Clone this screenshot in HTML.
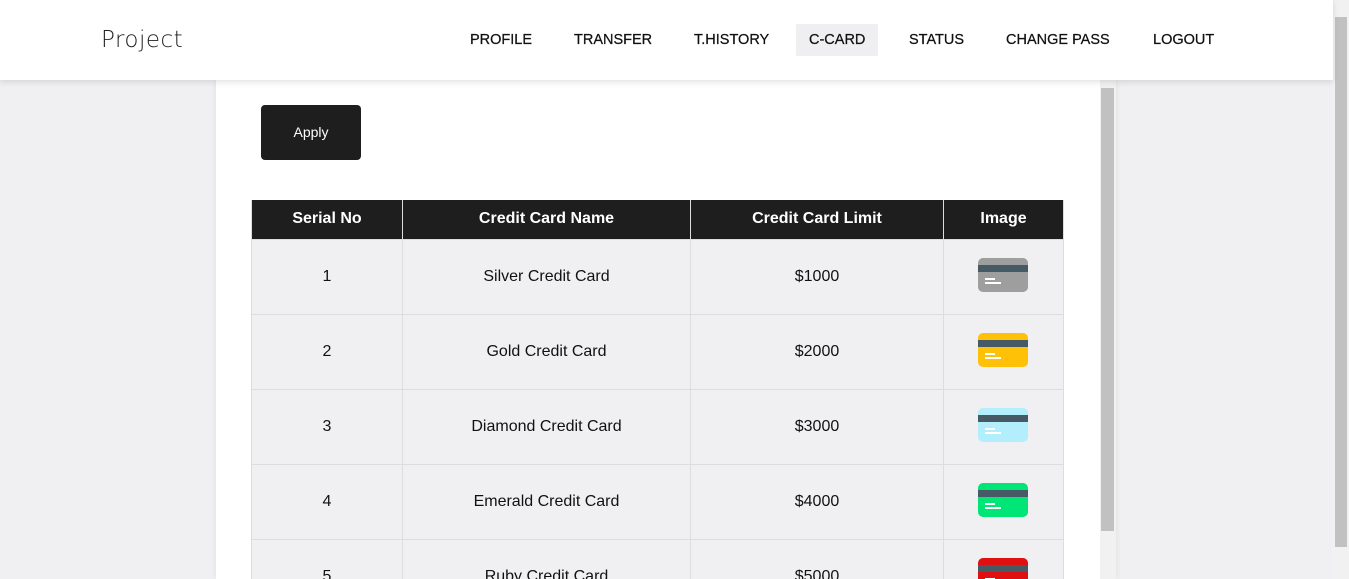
<!DOCTYPE html>
<html style="height:579px;overflow:hidden"><head><style>
*{box-sizing:border-box;margin:0;padding:0}
body{width:1349px;height:579px;overflow:hidden;background:#f0f0f2;font-family:"Liberation Sans",Arial,sans-serif;position:relative}
.nav{position:absolute;left:0;top:0;width:1333px;height:80px;background:#fff;box-shadow:0 2px 6px rgba(0,0,0,.12);z-index:5}
.logo{position:absolute;left:101px;top:27px;font-size:23px;color:#222;letter-spacing:.5px;font-family:"DejaVu Sans","Liberation Sans",sans-serif;font-weight:300}
.nav a{position:absolute;top:24px;height:32px;line-height:32px;font-size:14.5px;color:#111;padding:0 13px;text-decoration:none;-webkit-text-stroke:.25px #111}
.nav a.act{background:#efeff1;border-radius:2px}
.main{position:absolute;left:216px;top:80px;width:900px;height:499px;background:#fff;box-shadow:0 0 6px rgba(0,0,0,.08);overflow:hidden}
.isb{position:absolute;left:884px;top:0;width:16px;height:499px;background:#f1f1f1}
.isb div{position:absolute;left:1px;top:8px;width:13px;height:443px;background:#c1c1c1}
.btn{position:absolute;left:45px;top:25px;width:100px;height:55px;background:#1e1e1e;color:#fff;border-radius:4px;font-size:14px;text-align:center;line-height:55px}
table{position:absolute;left:35px;top:120px;border-collapse:collapse;width:813px;font-size:16px}
th{background:#1e1e1e;color:#fff;height:39px;font-weight:bold;border:1px solid #ddd;border-top:none}
td{background:#f0f0f2;height:75px;text-align:center;border:1px solid #ddd;color:#111}
.c{display:inline-block;width:50px;height:34px;border-radius:5px;position:relative;vertical-align:middle;margin:-3px 0 0 -2px;overflow:hidden}
.c:before{content:"";position:absolute;left:0;right:0;top:7px;height:7px;background:#455a64}
.c:after{content:"";position:absolute;left:7px;top:20px;width:10px;height:2px;background:#fff;box-shadow:0 4px 0 0 #fff,6px 4px 0 0 #fff}
.psb{position:absolute;left:1333px;top:0;width:16px;height:579px;background:#f1f1f1}
.psb div{position:absolute;left:2px;top:17px;width:12px;height:530px;background:#c1c1c1}
</style></head><body>
<div class="nav"><div class="logo">Project</div>
<a style="left:457px">PROFILE</a><a style="left:561px">TRANSFER</a><a style="left:681px">T.HISTORY</a><a class="act" style="left:796px">C-CARD</a><a style="left:896px">STATUS</a><a style="left:993px">CHANGE PASS</a><a style="left:1140px">LOGOUT</a></div>
<div class="main">
<div class="btn">Apply</div>
<table>
<tr><th style="width:151px">Serial No</th><th style="width:288px">Credit Card Name</th><th style="width:253px">Credit Card Limit</th><th>Image</th></tr>
<tr><td>1</td><td>Silver Credit Card</td><td>$1000</td><td><span class="c" style="background:#9e9e9e"></span></td></tr>
<tr><td>2</td><td>Gold Credit Card</td><td>$2000</td><td><span class="c" style="background:#ffc107"></span></td></tr>
<tr><td>3</td><td>Diamond Credit Card</td><td>$3000</td><td><span class="c" style="background:#b3eefc"></span></td></tr>
<tr><td>4</td><td>Emerald Credit Card</td><td>$4000</td><td><span class="c" style="background:#00e676"></span></td></tr>
<tr><td>5</td><td>Ruby Credit Card</td><td>$5000</td><td><span class="c" style="background:#e01010"></span></td></tr>
</table>
<div class="isb"><div></div></div>
</div>
<div class="psb"><div></div></div>
</body></html>
